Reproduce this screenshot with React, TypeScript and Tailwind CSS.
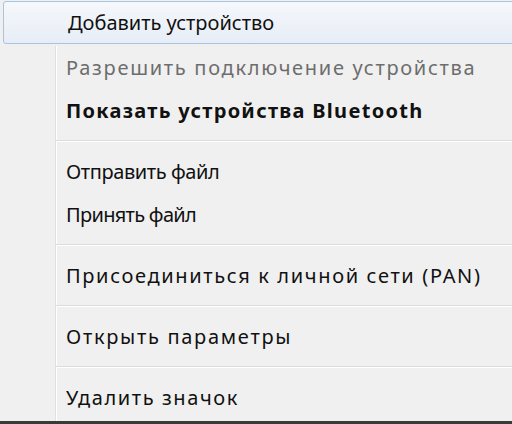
import React from 'react';

type Item = { label: string; disabled?: boolean; bold?: boolean; tracking: string };

// letter spacing per row, tuned to the widths in the screenshot
const groups: Item[][] = [
  [
    { label: 'Разрешить подключение устройства', disabled: true, tracking: 'tracking-[1.7px]' },
    { label: 'Показать устройства Bluetooth', bold: true, tracking: 'tracking-[1.3px]' },
  ],
  [
    { label: 'Отправить файл', tracking: 'tracking-[-0.4px]' },
    { label: 'Принять файл', tracking: 'tracking-[-0.7px]' },
  ],
  [{ label: 'Присоединиться к личной сети (PAN)', tracking: 'tracking-[1.65px]' }],
  [{ label: 'Открыть параметры', tracking: 'tracking-[1.7px]' }],
  [{ label: 'Удалить значок', tracking: 'tracking-[1.6px]' }],
];

function MenuItem({ item }: { item: Item }) {
  const color = item.disabled ? 'text-[#6d6d6d]' : 'text-[#111]';
  return (
    <div className={`h-[43px] flex items-center pl-[10px] whitespace-nowrap ${color} ${item.tracking} ${item.bold ? 'font-bold' : ''}`}>
      {item.label}
    </div>
  );
}

function Separator() {
  return (
    <div className="h-[18px] flex flex-col justify-center">
      <div className="border-t border-[#dcdcdc]" />
      <div className="border-t border-white" />
    </div>
  );
}

export default function App() {
  return (
    <div
      className="w-[512px] h-[424px] overflow-hidden bg-[#f0f0f0] border-b-[3px] border-[#3a3a3a] text-[20px] flex flex-col"
      style={{ fontFamily: '"Noto Sans", "Open Sans", sans-serif' }}
    >
      {/* highlighted item */}
      <div className="mt-[1px] ml-[3px] -mr-[4px] h-[43px] flex items-center pl-[64px] rounded-[3px] border border-[#a9c3e2] bg-gradient-to-b from-[#f5f8fc] to-[#e7edf6] text-[#111]">
        Добавить устройство
      </div>

      <div className="flex flex-1 mt-[2px]">
        <div className="w-[55px] shrink-0" />
        <div className="flex-1 border-l border-[#e0e0e0] shadow-[inset_1px_0_0_#ffffff]">
          {groups.map((group, gi) => (
            <div key={gi}>
              {gi > 0 && <Separator />}
              {group.map((item) => (
                <MenuItem key={item.label} item={item} />
              ))}
            </div>
          ))}
        </div>
      </div>
    </div>
  );
}
